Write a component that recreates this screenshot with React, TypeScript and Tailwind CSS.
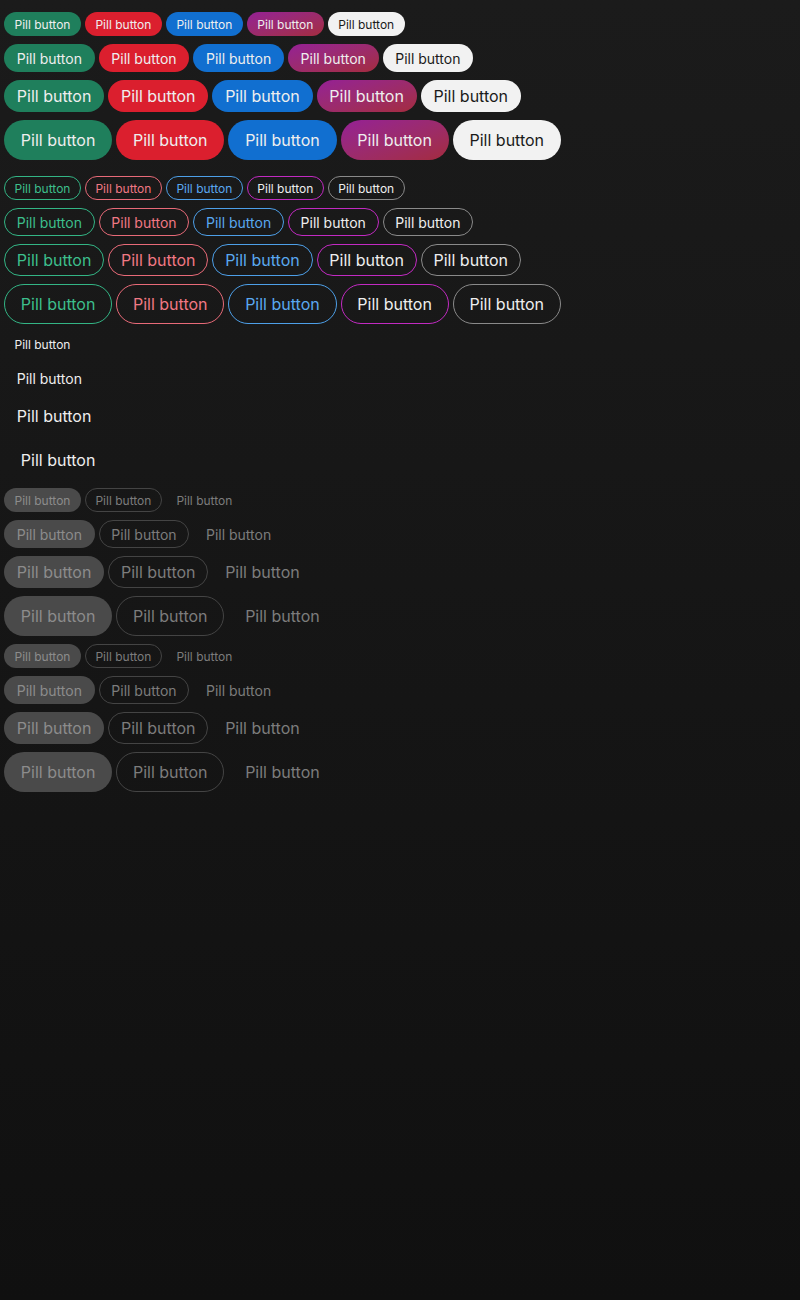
import React from 'react'

type Size = 'xs' | 'sm' | 'md' | 'lg'
type Variant =
  | 'green'
  | 'red'
  | 'blue'
  | 'purple'
  | 'light'
  | 'o-green'
  | 'o-red'
  | 'o-blue'
  | 'o-purple'
  | 'o-light'
  | 'ghost'
  | 'd-fill'
  | 'd-outline'
  | 'd-ghost'

const sizes: Record<Size, string> = {
  xs: 'h-6 px-[9.5px] pt-px text-[12px]',
  sm: 'h-7 px-[11.7px] pt-px text-[14px]',
  md: 'h-8 px-[11.8px] text-[16px]',
  lg: 'h-10 px-[15.8px] text-[16px]',
}

// every pill carries a 1px border (transparent where not drawn) so all variants share widths
const variants: Record<Variant, string> = {
  green: 'border-transparent bg-[#1f7f5c] text-[#eeeeee]',
  red: 'border-transparent bg-[#db1f2e] text-[#eeeeee]',
  blue: 'border-transparent bg-[#116fd0] text-[#eeeeee]',
  purple: 'border-transparent bg-origin-border bg-gradient-to-br from-[#951f95] to-[#a42b3e] text-[#eeeeee]',
  light: 'border-transparent bg-[#f2f2f2] text-[#1a1a1a]',
  'o-green': 'border-[#33b585] text-[#3dbf8c]',
  'o-red': 'border-[#e86a78] text-[#f07884]',
  'o-blue': 'border-[#4d9fe8] text-[#5aa8f0]',
  'o-purple': 'border-[#c22ac2] text-[#eeeeee]',
  'o-light': 'border-[#8a8a8a] text-[#eeeeee]',
  ghost: 'border-transparent text-[#eeeeee]',
  'd-fill': 'border-transparent bg-[#4a4a4a] text-[#8c8c8c]',
  'd-outline': 'border-[#444444] text-[#7c7c7c]',
  'd-ghost': 'border-transparent text-[#7c7c7c]',
}

function Pill({ size, variant }: { size: Size; variant: Variant }) {
  return (
    <button
      className={`inline-flex items-center justify-center rounded-full border whitespace-nowrap leading-none ${sizes[size]} ${variants[variant]}`}
    >
      Pill button
    </button>
  )
}

const allSizes: Size[] = ['xs', 'sm', 'md', 'lg']

function Group({ list }: { list: Variant[] }) {
  return (
    <>
      {allSizes.map((s) => (
        <div key={s} className="flex gap-1">
          {list.map((v) => (
            <Pill key={v} size={s} variant={v} />
          ))}
        </div>
      ))}
    </>
  )
}

export default function App() {
  return (
    <div className="min-h-screen bg-gradient-to-b from-[#1b1b1b] to-[#101010] px-1 pt-3 font-['Inter',sans-serif]">
      <div className="flex flex-col gap-2">
        <Group list={['green', 'red', 'blue', 'purple', 'light']} />
        <div className="h-2" />
      </div>
      <div className="flex flex-col gap-2">
        <Group list={['o-green', 'o-red', 'o-blue', 'o-purple', 'o-light']} />
        <Group list={['ghost']} />
        <Group list={['d-fill', 'd-outline', 'd-ghost']} />
        <Group list={['d-fill', 'd-outline', 'd-ghost']} />
      </div>
    </div>
  )
}
